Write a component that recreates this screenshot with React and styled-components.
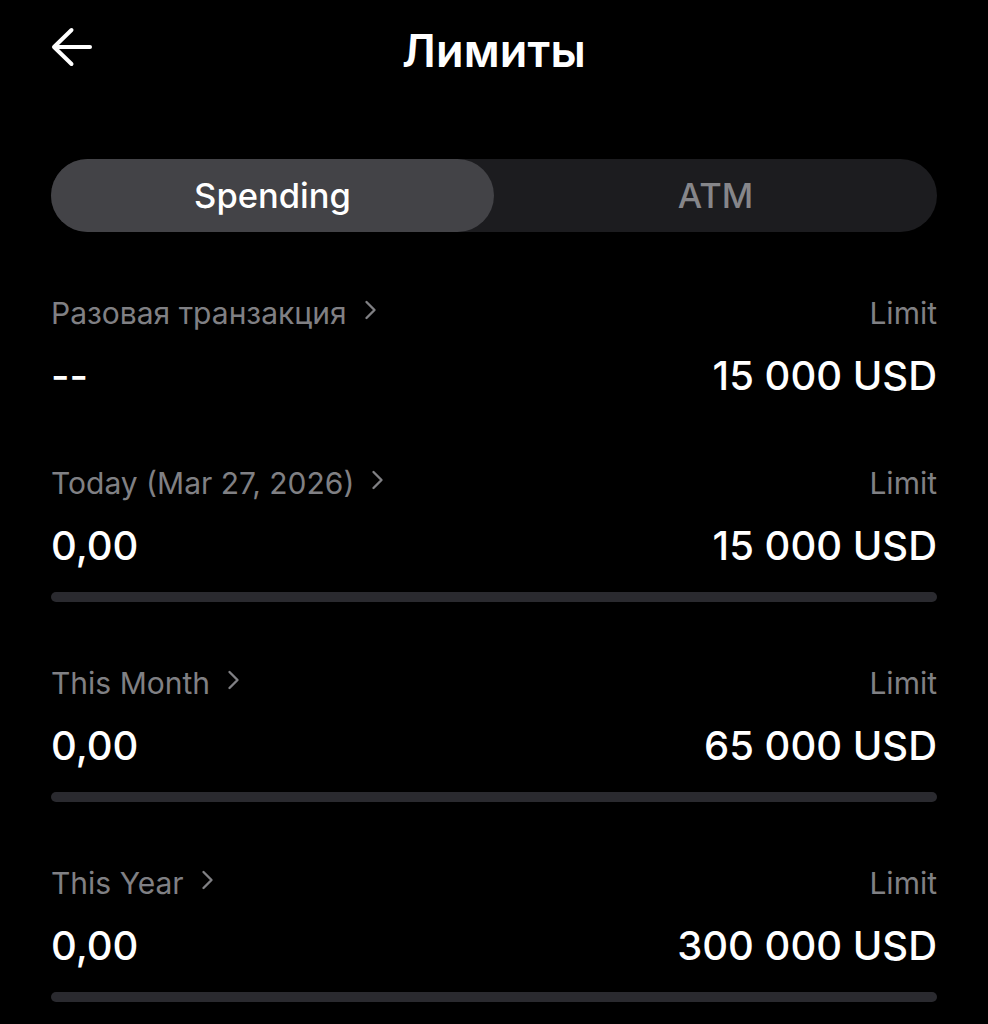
import styled, { createGlobalStyle } from 'styled-components';

const GlobalStyle = createGlobalStyle`
	html, body {
		margin: 0;
		padding: 0;
		background: #000;
	}
	body {
		font-family: Inter, "Noto Sans", sans-serif;
		color: #fff;
		-webkit-font-smoothing: antialiased;
	}
`;

const Page = styled.div`
	/* Screen */
	width: 988px;
	min-height: 1024px;
	box-sizing: border-box;
	padding: 0 51px;
	background: #000;
	overflow: hidden;
`;

const Header = styled.header`
	height: 100px;
	display: grid;
	grid-template-columns: 60px 1fr 60px;
	align-items: center;
`;

const BackButton = styled.button`
	background: none;
	border: 0;
	padding: 0;
	margin-bottom: 6px;
	display: flex;
	align-items: center;
	color: #fff;

	& svg {
		width: 42px;
		height: 40px;
	}
`;

const Title = styled.h1`
	margin: 0;
	text-align: center;
	font-size: 45px;
	font-weight: 600;
	letter-spacing: 0.2px;
`;

const Segmented = styled.div`
	margin-top: 59px;
	height: 73px;
	border-radius: 37px;
	background: #1c1c1f;
	display: grid;
	grid-template-columns: 1fr 1fr;
`;

const Segment = styled.button`
	border: 0;
	border-radius: 37px;
	font-family: inherit;
	font-size: 34.5px;
	font-weight: 500;
	background: ${(props) => (props.active ? '#434347' : 'transparent')};
	color: ${(props) => (props.active ? '#fff' : '#86868a')};
`;

const List = styled.div`
	margin-top: 63px;
	display: flex;
	flex-direction: column;
`;

const Row = styled.div`
	display: flex;
	flex-direction: column;
	padding-bottom: ${(props) => (props.bar ? '63px' : '65px')};
`;

const Line = styled.div`
	display: flex;
	justify-content: space-between;
	align-items: center;
`;

const Label = styled.span`
	display: flex;
	align-items: center;
	gap: 16px;
	font-size: 30px;
	line-height: 36px;
	color: #808084;

	& svg {
		width: 14px;
		height: 22px;
		margin-bottom: 6px;
	}
`;

const Value = styled.span`
	margin-top: 21px;
	font-size: 40px;
	font-weight: 500;
	color: #fff;
	line-height: 48px;
`;

const Bar = styled.div`
	margin-top: 22px;
	height: 10px;
	border-radius: 5px;
	background: #2a2a2f;
	overflow: hidden;
`;

const Fill = styled.div`
	height: 100%;
	background: #fff;
`;

const ArrowLeft = () => (
	<svg viewBox="0 0 42 40" fill="none" stroke="currentColor" strokeWidth="4" strokeLinecap="round" strokeLinejoin="round">
		<path d="M39 20H4" />
		<path d="M20.5 3L3 20l17.5 17" />
	</svg>
);

const Chevron = () => (
	<svg viewBox="0 0 14 22" fill="none" stroke="currentColor" strokeWidth="2.4" strokeLinecap="round" strokeLinejoin="round">
		<path d="M3.5 3l8 8-8 8" />
	</svg>
);

const rows = [
	{ title: 'Разовая транзакция', spent: '--', limit: '15 000 USD', bar: false },
	{ title: 'Today (Mar 27, 2026)', spent: '0,00', limit: '15 000 USD', bar: true, used: 0 },
	{ title: 'This Month', spent: '0,00', limit: '65 000 USD', bar: true, used: 0 },
	{ title: 'This Year', spent: '0,00', limit: '300 000 USD', bar: true, used: 0 },
];

function LimitRow({ title, spent, limit, bar, used }) {
	return (
		<Row bar={bar}>
			<Line>
				<Label>
					{title}
					<Chevron />
				</Label>
				<Label>Limit</Label>
			</Line>
			<Line>
				<Value>{spent}</Value>
				<Value>{limit}</Value>
			</Line>
			{bar && (
				<Bar>
					<Fill style={{ width: `${used}%` }} />
				</Bar>
			)}
		</Row>
	);
}

export default function App() {
	return (
		<>
			<GlobalStyle />
			<Page>
				<Header>
					<BackButton aria-label="Back">
						<ArrowLeft />
					</BackButton>
					<Title>Лимиты</Title>
					<span />
				</Header>
				<Segmented>
					<Segment active>Spending</Segment>
					<Segment>ATM</Segment>
				</Segmented>
				<List>
					{rows.map((row) => (
						<LimitRow key={row.title} {...row} />
					))}
				</List>
			</Page>
		</>
	);
}
